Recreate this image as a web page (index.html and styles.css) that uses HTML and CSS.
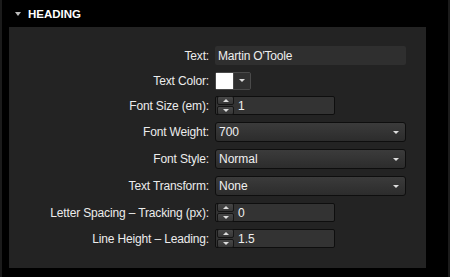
FILE: index.html
```html
<!DOCTYPE html>
<html lang="en">
<head>
    <meta charset="UTF-8">
    <meta name="viewport" content="width=device-width, initial-scale=1.0">
    <title>Heading Settings</title>
    <link rel="stylesheet" href="styles.css">
</head>
<body>
    <div class="sidebar">
        <div class="section-head">
            <span class="caret"></span>
            <span class="section-title">HEADING</span>
        </div>

        <div class="panel">
            <label class="lbl">Text:</label>
            <div class="ctl"><input type="text" class="text-box" value="Martin O'Toole"></div>

            <label class="lbl">Text Color:</label>
            <div class="ctl">
                <div class="color-pick">
                    <span class="swatch"></span>
                    <span class="color-btn"><span class="tri"></span></span>
                </div>
            </div>

            <label class="lbl">Font Size (em):</label>
            <div class="ctl">
                <div class="num-box">
                    <div class="spin">
                        <span class="spin-btn"><span class="tri-up"></span></span>
                        <span class="spin-btn"><span class="tri"></span></span>
                    </div>
                    <span class="num-val">1</span>
                </div>
            </div>

            <label class="lbl">Font Weight:</label>
            <div class="ctl"><div class="select-box"><span>700</span><span class="tri"></span></div></div>

            <label class="lbl">Font Style:</label>
            <div class="ctl"><div class="select-box"><span>Normal</span><span class="tri"></span></div></div>

            <label class="lbl">Text Transform:</label>
            <div class="ctl"><div class="select-box"><span>None</span><span class="tri"></span></div></div>

            <label class="lbl">Letter Spacing – Tracking (px):</label>
            <div class="ctl">
                <div class="num-box">
                    <div class="spin">
                        <span class="spin-btn"><span class="tri-up"></span></span>
                        <span class="spin-btn"><span class="tri"></span></span>
                    </div>
                    <span class="num-val">0</span>
                </div>
            </div>

            <label class="lbl">Line Height – Leading:</label>
            <div class="ctl">
                <div class="num-box">
                    <div class="spin">
                        <span class="spin-btn"><span class="tri-up"></span></span>
                        <span class="spin-btn"><span class="tri"></span></span>
                    </div>
                    <span class="num-val">1.5</span>
                </div>
            </div>
        </div>
    </div>
</body>
</html>
```

FILE: styles.css
```css
body { margin: 0; background: #000; font-family: "Liberation Sans", Arial, sans-serif; font-size: 12px; color: #e6e6e6; }
.sidebar { width: 446px; height: 277px; border-left: 2px solid #1b1b1b; border-right: 2px solid #1b1b1b; box-sizing: content-box; }
.section-head { height: 27px; display: flex; align-items: center; padding-left: 13px; }
.caret { width: 0; height: 0; border-left: 3px solid transparent; border-right: 3px solid transparent; border-top: 4px solid #bbb; margin-right: 7px; }
.section-title { font-weight: bold; font-size: 11.5px; color: #fff; }

.panel { margin-left: 7px; width: 417px; height: 241px; background: #232323; box-sizing: border-box; padding-top: 19px;
    display: grid; grid-template-columns: 200px 1fr; grid-template-rows: 19px 17px 19px 20px 20px 20px 19px 19px; column-gap: 6px; row-gap: 7px; }
.lbl { text-align: right; align-self: center; color: #ececec; letter-spacing: -0.15px; }
.ctl { display: flex; align-items: center; }

.text-box { width: 191px; height: 19px; box-sizing: border-box; border: none; border-radius: 2px; background: #2f2f2f; color: #eee; font: inherit; padding: 0 3px; outline: none; letter-spacing: -0.2px; }

.color-pick { display: flex; height: 18px; border: 1px solid #4a4a4a; border-radius: 2px; box-sizing: border-box; }
.swatch { width: 17px; background: #fff; }
.color-btn { width: 16px; background: #303030; display: flex; align-items: center; justify-content: center; border-left: 1px solid #4a4a4a; }

.tri { width: 0; height: 0; border-left: 3px solid transparent; border-right: 3px solid transparent; border-top: 3px solid #ddd; }
.tri-up { width: 0; height: 0; border-left: 3.5px solid transparent; border-right: 3.5px solid transparent; border-bottom: 3px solid #ddd; }

.num-box { width: 120px; height: 19px; box-sizing: border-box; display: flex; align-items: center; background: #333; border: 1px solid #0e0e0e; border-radius: 2px; }
.spin { display: flex; flex-direction: column; gap: 1px; padding: 0 2px 0 1px; }
.spin-btn { width: 15px; height: 7px; background: linear-gradient(#474747, #363636); border: 1px solid #151515; border-radius: 2px; display: flex; align-items: center; justify-content: center; box-sizing: content-box; }
.num-val { padding-left: 2px; color: #f0f0f0; }

.select-box { width: 191px; height: 20px; box-sizing: border-box; display: flex; align-items: center; justify-content: space-between; padding: 0 6px 0 3px;
    background: linear-gradient(#3b3b3b, #2c2c2c); border: 1px solid #0e0e0e; border-radius: 3px; color: #f0f0f0; }
```
